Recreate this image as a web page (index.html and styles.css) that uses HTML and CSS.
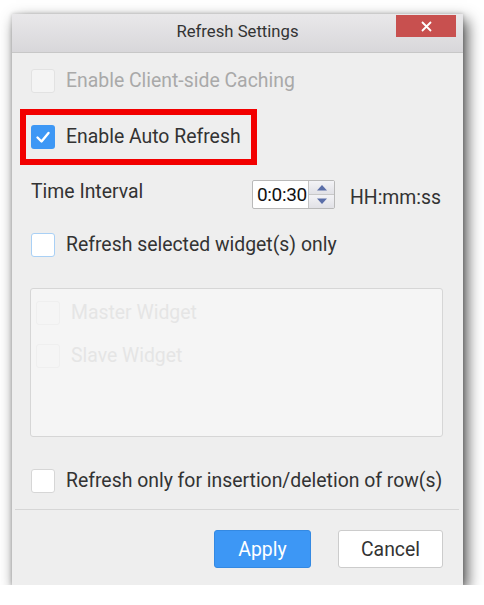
FILE: index.html
```html
<!DOCTYPE html>
<html>
<head>
<meta charset="utf-8">
<link rel="stylesheet" href="styles.css">
</head>
<body>
<div class="dialog">
  <div class="header">
    <span class="title">Refresh Settings</span>
    <button class="close" aria-label="Close">
      <svg width="11" height="11" viewBox="0 0 11 11"><path d="M1 1L10 10M10 1L1 10" stroke="#fff" stroke-width="1.8" fill="none"/></svg>
    </button>
  </div>
  <div class="content">
    <div class="row disabled">
      <span class="cb cb-disabled"></span>
      <span class="label">Enable Client-side Caching</span>
    </div>
    <div class="highlight">
      <div class="row">
        <span class="cb cb-checked">
          <svg width="24" height="24" viewBox="0 0 24 24"><path d="M6.5 12.5L10.5 16.5L17.5 8" stroke="#fff" stroke-width="2.4" fill="none" stroke-linecap="round" stroke-linejoin="round"/></svg>
        </span>
        <span class="label">Enable Auto Refresh</span>
      </div>
    </div>
    <div class="time-row">
      <span class="time-label">Time Interval</span>
      <div class="spinner">
        <span class="spin-value">0:0:30</span>
        <div class="spin-btns">
          <span class="spin-btn"><svg width="12" height="7" viewBox="0 0 12 7"><path d="M1 6.5L6 1L11 6.5Z" fill="#5a6ea8"/></svg></span>
          <span class="spin-btn"><svg width="12" height="7" viewBox="0 0 12 7"><path d="M1 0.5L6 6L11 0.5Z" fill="#5a6ea8"/></svg></span>
        </div>
      </div>
      <span class="format">HH:mm:ss</span>
    </div>
    <div class="row row-selected">
      <span class="cb cb-focus"></span>
      <span class="label">Refresh selected widget(s) only</span>
    </div>
    <div class="panel">
      <div class="prow">
        <span class="cb cb-faint"></span>
        <span class="plabel">Master Widget</span>
      </div>
      <div class="prow">
        <span class="cb cb-faint"></span>
        <span class="plabel">Slave Widget</span>
      </div>
    </div>
    <div class="row row-insert">
      <span class="cb"></span>
      <span class="label">Refresh only for insertion/deletion of row(s)</span>
    </div>
  </div>
  <div class="footer">
    <button class="btn btn-primary">Apply</button>
    <button class="btn btn-default">Cancel</button>
  </div>
</div>
</body>
</html>
```

FILE: styles.css
```css
html, body {
  margin: 0;
  padding: 0;
  background: #ffffff;
}
body {
  font-family: Roboto, "Liberation Sans", sans-serif;
  color: #333333;
}
.dialog {
  margin: 14px 0 0 12px;
  width: 451px;
  height: 571px;
  background: #eeeeee;
  box-shadow: 4px 6px 14px rgba(0, 0, 0, 0.7), 0 0 4px rgba(0, 0, 0, 0.2);
  display: flex;
  flex-direction: column;
}
.header {
  height: 38px;
  border-bottom: 1px solid #c7c7c7;
  background: linear-gradient(#e9e8ea, #d8d7da);
  display: flex;
  align-items: center;
  justify-content: center;
  position: relative;
}
.title {
  font-size: 16.7px;
  color: #333333;
  margin-top: -3px;
}
.close {
  position: absolute;
  top: 1px;
  right: 7px;
  width: 60px;
  height: 22px;
  border: none;
  padding: 0;
  background: #c8504f;
  display: flex;
  align-items: center;
  justify-content: center;
}
.content {
  padding: 16px 19px 0 19px;
  flex: 1;
}
.row {
  display: flex;
  align-items: center;
  height: 24px;
}
.cb {
  width: 22px;
  height: 22px;
  border: 1px solid #d6d6d6;
  border-radius: 3px;
  background: #ffffff;
  flex: none;
  display: flex;
  align-items: center;
  justify-content: center;
}
.cb-disabled {
  background: #f4f4f4;
  border-color: #e2e2e2;
}
.cb-checked {
  width: 24px;
  height: 24px;
  border: none;
  background: #3d97f5;
}
.cb-focus {
  border-color: #a9d0f5;
}
.cb-faint {
  background: #f5f5f5;
  border-color: #efefef;
}
.label {
  font-size: 19.4px;
  margin-left: 11px;
  color: #333333;
  margin-top: -2px;
  white-space: nowrap;
}
.disabled .label {
  color: #a9a9a9;
}
.highlight {
  margin: 16px 0 0 -11px;
  border: 6px solid #f20000;
  padding: 10px 10px 10px 5px;
  width: fit-content;
}
.time-row {
  margin-top: 15px;
  height: 29px;
  display: flex;
  align-items: center;
}
.time-label {
  font-size: 19.4px;
  width: 221px;
  margin-bottom: 6px;
}
.spinner {
  display: flex;
  height: 27px;
  border: 1px solid #b9b9b9;
  border-radius: 2px;
  background: #ffffff;
}
.spin-value {
  width: 54px;
  font-size: 19px;
  display: flex;
  align-items: center;
  justify-content: flex-end;
  padding-right: 1px;
  color: #111111;
  letter-spacing: -0.3px;
}
.spin-btns {
  width: 25px;
  display: flex;
  flex-direction: column;
  border-left: 1px solid #c4c4c4;
}
.spin-btn {
  flex: 1;
  display: flex;
  align-items: center;
  justify-content: center;
  background: linear-gradient(#f3f3f6, #e1e1e6);
}
.spin-btn + .spin-btn {
  border-top: 1px solid #c8c8c8;
}
.format {
  font-size: 19.4px;
  margin-left: 15px;
  margin-top: 5px;
}
.row-selected {
  margin-top: 24px;
}
.panel {
  margin: 31px 0 0 -1px;
  border: 1px solid #d6d6d6;
  border-radius: 3px;
  background: #f5f5f5;
  padding: 12px 0 0 5px;
  box-sizing: border-box;
  height: 149px;
  width: 413px;
  display: flex;
  flex-direction: column;
  gap: 19px;
}
.prow {
  display: flex;
  align-items: center;
  height: 24px;
}
.plabel {
  font-size: 19.4px;
  color: #e5e5e5;
  margin-left: 11px;
  margin-top: -2px;
}
.row-insert {
  margin-top: 32px;
}
.footer {
  margin: 0 4px 0 3px;
  border-top: 1px solid #d6d6d6;
  height: 76px;
  display: flex;
  align-items: flex-start;
  justify-content: flex-end;
  padding: 20px 16px 0 0;
  box-sizing: border-box;
  gap: 27px;
}
.btn {
  height: 38px;
  border-radius: 3px;
  font-family: Roboto, "Liberation Sans", sans-serif;
  font-size: 19.4px;
  padding: 0;
}
.btn-primary {
  width: 97px;
  background: #3d97f5;
  border: 1px solid #3489e2;
  color: #ffffff;
}
.btn-default {
  width: 105px;
  background: #ffffff;
  border: 1px solid #cccccc;
  color: #333333;
}
```
